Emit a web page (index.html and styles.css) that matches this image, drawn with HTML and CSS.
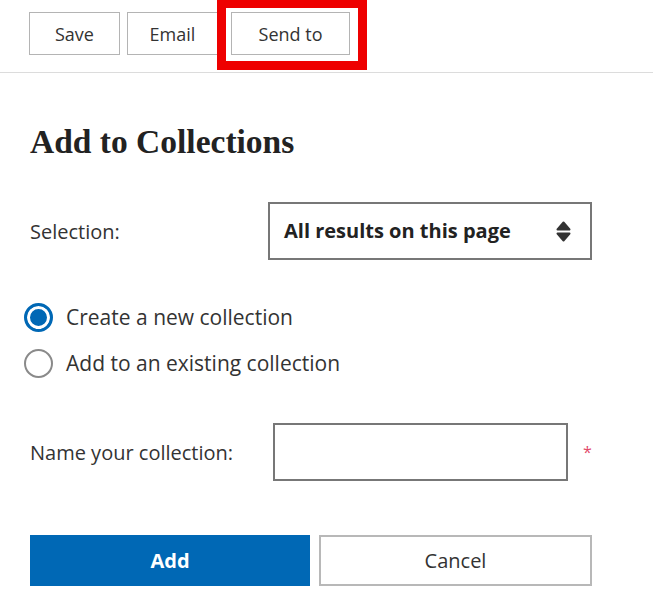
FILE: index.html
```html
<!DOCTYPE html>
<html lang="en">
<head>
    <meta charset="UTF-8">
    <meta name="viewport" content="width=device-width, initial-scale=1.0">
    <title>Add to Collections</title>
    <link rel="stylesheet" href="styles.css">
</head>
<body>
    <div class="toolbar">
        <button class="tool-btn save">Save</button>
        <button class="tool-btn email">Email</button>
        <span class="highlight">
            <button class="tool-btn send">Send to</button>
        </span>
    </div>

    <div class="panel">
        <h1>Add to Collections</h1>

        <div class="row selection-row">
            <label class="row-label selection-label" for="selection">Selection:</label>
            <div class="select-box" id="selection">
                <span>All results on this page</span>
                <svg class="updown" width="15" height="21" viewBox="0 0 15 21">
                    <path d="M7.5 1.5 L13.5 8.5 H1.5 Z" />
                    <path d="M1.5 12.5 H13.5 L7.5 19.5 Z" />
                </svg>
            </div>
        </div>

        <div class="radios">
            <label class="radio">
                <span class="dot checked"></span>
                Create a new collection
            </label>
            <label class="radio">
                <span class="dot"></span>
                Add to an existing collection
            </label>
        </div>

        <div class="row name-row">
            <label class="row-label name-label" for="name">Name your collection:</label>
            <input type="text" id="name" class="name-input">
            <span class="required">*</span>
        </div>

        <div class="actions">
            <button class="btn-add">Add</button>
            <button class="btn-cancel">Cancel</button>
        </div>
    </div>
</body>
</html>
```

FILE: styles.css
```css
body {
    margin: 0;
    padding: 0;
    background: #fff;
    color: #333;
    font-family: 'Open Sans', 'Noto Sans', sans-serif;
}
.toolbar {
    display: flex;
    align-items: flex-start;
    padding: 12px 0 17px 29px;
    border-bottom: 1px solid #dcdcdc;
}
.tool-btn {
    height: 43px;
    background: #fff;
    border: 1px solid #b4b4b4;
    font-family: inherit;
    font-size: 18px;
    color: #333;
    padding: 0;
}
.save {
    width: 91px;
}
.email {
    width: 91px;
    margin-left: 7px;
}
.highlight {
    position: relative;
    margin-left: 13px;
    display: flex;
}
.highlight::after {
    content: "";
    position: absolute;
    left: -14px;
    top: -12px;
    right: -17px;
    bottom: -15px;
    border: 9px solid #ee0000;
    border-top-width: 8px;
}
.send {
    width: 119px;
}
.panel {
    padding: 0 30px;
}
h1 {
    font-family: 'Liberation Serif', serif;
    font-weight: bold;
    font-size: 33.5px;
    color: #222;
    margin: 50px 0 0;
}
.row {
    display: flex;
    align-items: center;
}
.row-label {
    font-size: 20px;
    color: #333;
}
.selection-row {
    margin-top: 41px;
}
.selection-label {
    width: 238px;
}
.select-box {
    width: 324px;
    height: 58px;
    border: 2px solid #777;
    display: flex;
    align-items: center;
    justify-content: space-between;
    padding: 0 19px 0 14px;
    box-sizing: border-box;
    font-weight: bold;
    font-size: 20px;
    color: #222;
}
.select-box span {
    margin-top: -1px;
}
.updown path {
    fill: #333;
    stroke: #333;
    stroke-width: 2;
    stroke-linejoin: round;
}
.radios {
    margin-top: 43px;
    margin-left: -6px;
    display: flex;
    flex-direction: column;
    gap: 17px;
}
.radio {
    display: flex;
    align-items: center;
    gap: 13px;
    font-size: 21px;
    line-height: 29px;
    color: #333;
}
.dot {
    width: 29px;
    height: 29px;
    box-sizing: border-box;
    border-radius: 50%;
    border: 2px solid #8a8a8a;
    background: #fff;
}
.dot.checked {
    border: 3px solid #0068b5;
    box-shadow: inset 0 0 0 3px #fff;
    background: #0068b5;
}
.name-row {
    margin-top: 45px;
}
.name-label {
    width: 243px;
}
.name-input {
    width: 295px;
    height: 58px;
    box-sizing: border-box;
    border: 2px solid #777;
    margin: 0;
}
.required {
    color: #e24a6a;
    font-size: 16px;
    margin-left: 15px;
}
.actions {
    display: flex;
    gap: 9px;
    margin-top: 54px;
}
.actions button {
    height: 51px;
    font-family: inherit;
    font-size: 20px;
}
.btn-add {
    width: 280px;
    background: #0068b5;
    color: #fff;
    font-weight: bold;
    border: none;
}
.btn-cancel {
    width: 273px;
    background: #fff;
    color: #333;
    border: 2px solid #b8b8b8;
}
```
